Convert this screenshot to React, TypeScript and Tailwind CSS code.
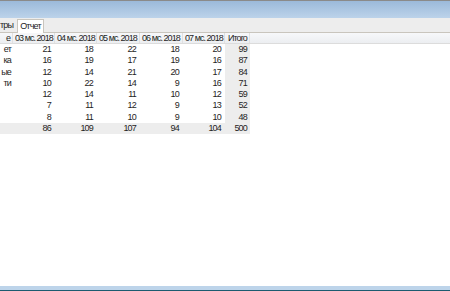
const cols = ['03 мс. 2018', '04 мс. 2018', '05 мс. 2018', '06 мс. 2018', '07 мс. 2018'];

const rows: { label: string; values: number[]; total: number }[] = [
  { label: 'ет', values: [21, 18, 22, 18, 20], total: 99 },
  { label: 'ка', values: [16, 19, 17, 19, 16], total: 87 },
  { label: 'ые', values: [12, 14, 21, 20, 17], total: 84 },
  { label: 'ти', values: [10, 22, 14, 9, 16], total: 71 },
  { label: '', values: [12, 14, 11, 10, 12], total: 59 },
  { label: '', values: [7, 11, 12, 9, 13], total: 52 },
  { label: '', values: [8, 11, 10, 9, 10], total: 48 },
];

const totals = [86, 109, 107, 94, 104];

const gridCols = 'grid grid-cols-[13px_42px_42px_43px_43px_42px_25px_1fr]';

export default function App() {
  return (
    <div className="flex h-[291px] w-[450px] flex-col overflow-hidden bg-white text-[9px] tracking-[-0.8px] text-[#1e1e1e] [font-family:'Liberation_Sans',Arial,sans-serif]">
      <div className="h-px bg-[#8a8a8a]" />
      <div className="h-[17px] bg-gradient-to-b from-[#9bb9da] to-[#bcd3ea]" />
      <div className="flex h-[15px] items-end border-b border-[#c9c5bd] bg-[#ededed]">
        <div className="flex h-[13px] w-[17px] items-center leading-none">тры</div>
        <div className="-mb-px flex h-[14px] w-[27px] items-center justify-center border border-b-0 border-[#c9c5bd] bg-white leading-none">
          Отчет
        </div>
      </div>

      <div className={`${gridCols} h-[11px] border-b border-[#dcdcdc] bg-gradient-to-b from-[#f7f8fa] to-[#eceef1] leading-[10px] tracking-[-0.95px]`}>
        <div className="border-r border-[#e0e0e0] pr-[2px] text-right">е</div>
        {cols.map((c) => (
          <div key={c} className="overflow-hidden whitespace-nowrap border-r border-[#e0e0e0] pl-[2px]">
            {c}
          </div>
        ))}
        <div className="border-r border-[#e0e0e0] pl-[3px]">Итого</div>
        <div />
      </div>

      {rows.map((r, i) => (
        <div key={i} className={`${gridCols} h-[11.3px] leading-[11px]`}>
          <div className="pr-[2px] text-right">{r.label}</div>
          {r.values.map((v, j) => (
            <div key={j} className="pr-[4px] text-right">
              {v}
            </div>
          ))}
          <div className="bg-[#ededed] pr-[3px] text-right">{r.total}</div>
          <div />
        </div>
      ))}

      <div className={`${gridCols} h-[11.3px] leading-[11px]`}>
        <div className="bg-[#ededed]" />
        {totals.map((v, j) => (
          <div key={j} className="bg-[#ededed] pr-[4px] text-right">
            {v}
          </div>
        ))}
        <div className="bg-[#ededed] pr-[3px] text-right">500</div>
        <div />
      </div>

      <div className="flex-1" />
      <div className="h-[4px] bg-[#bdd4ea]" />
      <div className="h-[1px] bg-[#1d5b70]" />
    </div>
  );
}
